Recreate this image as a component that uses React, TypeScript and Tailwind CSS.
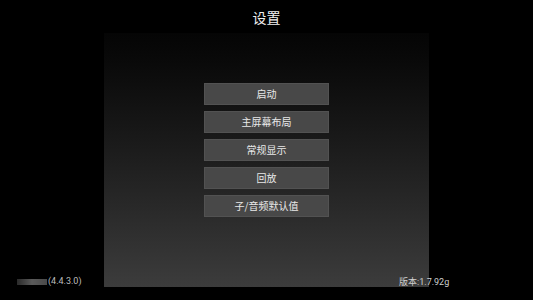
import React from "react";

const items = ["启动", "主屏幕布局", "常规显示", "回放", "子/音频默认值"];

export default function App() {
  const font = { fontFamily: '"Noto Sans CJK SC", "Noto Sans", sans-serif' };
  return (
    <div className="relative h-[300px] w-[533px] overflow-hidden bg-black" style={font}>
      <div className="flex h-[33px] items-center justify-center">
        <span className="text-[14px] leading-none text-[#f0f0f0]">设置</span>
      </div>
      <div className="mx-auto flex h-[254px] w-[325px] flex-col items-center gap-[6px] bg-gradient-to-b from-[#050505] to-[#3c3c3c] pt-[50px]">
        {items.map((t) => (
          <div
            key={t}
            className="flex h-[22px] w-[125px] items-center justify-center border border-[#525252] bg-[#484848] text-[10px] leading-none text-[#e8e8e8]"
          >
            {t}
          </div>
        ))}
      </div>
      <div className="absolute left-[17px] top-[277px] flex items-center text-[9px] leading-none text-[#bdbdbd]">
        <span className="mr-[1px] h-[6px] w-[30px] bg-gradient-to-r from-[#2a2a2a] via-[#5a5a5a] to-[#4a4a4a] blur-[0.5px]"></span>
        <span style={{ fontFamily: 'Roboto, sans-serif' }}>(4.4.3.0)</span>
      </div>
      <div className="absolute left-[399px] top-[277px] text-[9px] leading-none text-[#cfcfcf]">
        版本<span style={{ fontFamily: 'Roboto, sans-serif' }}>:1.7.92g</span>
      </div>
    </div>
  );
}
